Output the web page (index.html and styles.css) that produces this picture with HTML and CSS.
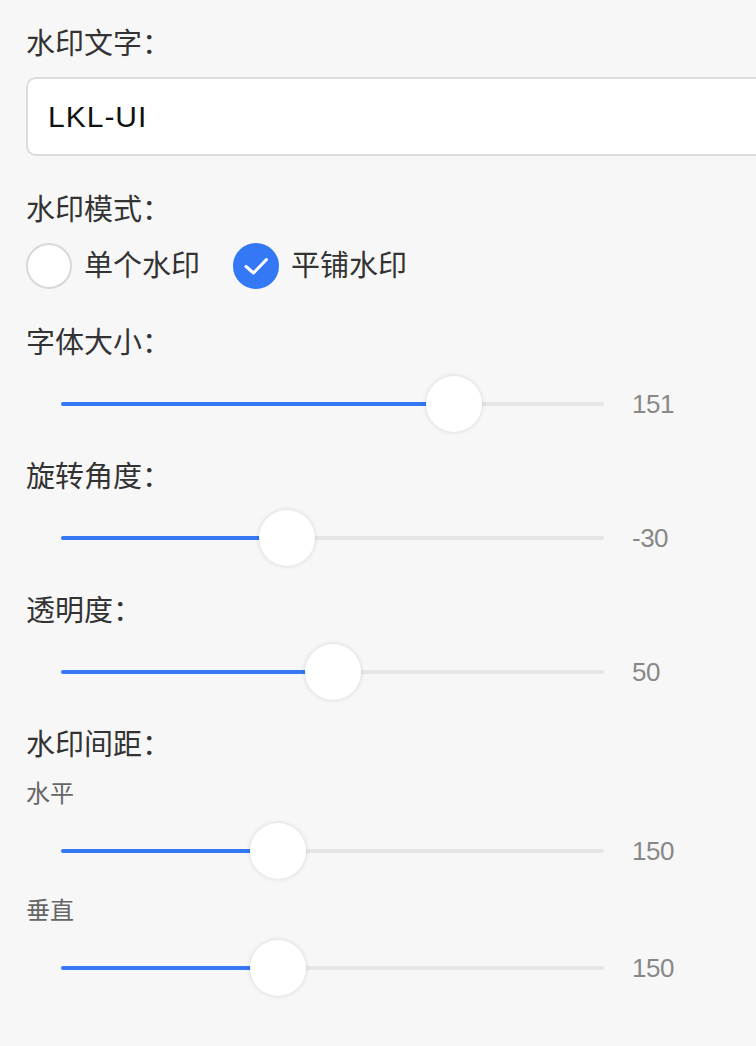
FILE: index.html
```html
<!DOCTYPE html>
<html lang="zh">
<head>
  <meta charset="UTF-8">
  <meta name="viewport" content="width=device-width, initial-scale=1.0">
  <title>水印设置</title>
  <link rel="stylesheet" href="styles.css">
</head>
<body>

<div class="panel">
  <div class="form-item spaced">
    <div class="label">水印文字：</div>
    <input class="text-input" type="text" value="LKL-UI">
  </div>

  <div class="form-item spaced">
    <div class="label">水印模式：</div>
    <div class="radio-group">
      <label class="radio">
        <span class="radio-dot"></span>
        <span>单个水印</span>
      </label>
      <label class="radio checked">
        <span class="radio-dot">
          <svg viewBox="0 0 46 46" width="46" height="46"><path d="M13 23.5l7.5 6.5 13-13.5" fill="none" stroke="#fff" stroke-width="3" stroke-linecap="round" stroke-linejoin="round"/></svg>
        </span>
        <span>平铺水印</span>
      </label>
    </div>
  </div>

  <div class="form-item">
    <div class="label">字体大小：</div>
    <div class="slider">
      <div class="track">
        <div class="fill" style="width: 72.4%"></div>
        <div class="thumb" style="left: 72.4%"></div>
      </div>
      <div class="value">151</div>
    </div>
  </div>

  <div class="form-item">
    <div class="label">旋转角度：</div>
    <div class="slider">
      <div class="track">
        <div class="fill" style="width: 41.7%"></div>
        <div class="thumb" style="left: 41.7%"></div>
      </div>
      <div class="value">-30</div>
    </div>
  </div>

  <div class="form-item">
    <div class="label">透明度：</div>
    <div class="slider">
      <div class="track">
        <div class="fill" style="width: 50%"></div>
        <div class="thumb" style="left: 50%"></div>
      </div>
      <div class="value">50</div>
    </div>
  </div>

  <div class="form-item">
    <div class="label">水印间距：</div>
    <div class="sub-label">水平</div>
    <div class="slider">
      <div class="track">
        <div class="fill" style="width: 40%"></div>
        <div class="thumb" style="left: 40%"></div>
      </div>
      <div class="value">150</div>
    </div>
    <div class="sub-label">垂直</div>
    <div class="slider">
      <div class="track">
        <div class="fill" style="width: 40%"></div>
        <div class="thumb" style="left: 40%"></div>
      </div>
      <div class="value">150</div>
    </div>
  </div>
</div>

</body>
</html>
```

FILE: styles.css
```css
html, body {
  overflow-x: hidden;
}
body {
  margin: 0;
  background-color: #f7f7f7;
  font-family: "Liberation Sans", "Noto Sans CJK SC", sans-serif;
  color: #333;
}
.panel {
  padding: 24px 26px 40px;
}
.form-item {
  margin-bottom: 25px;
}
.form-item.spaced {
  margin-bottom: 34px;
}
.label {
  font-size: 29px;
  line-height: 40px;
  height: 40px;
  margin-bottom: 13px;
}
.sub-label {
  font-size: 24px;
  line-height: 32px;
  color: #666;
  margin: 0 0 13px;
}
.slider + .sub-label {
  margin-top: 16px;
}
.label + .sub-label {
  margin-top: 0;
}
.text-input {
  display: block;
  box-sizing: border-box;
  width: 780px;
  height: 79px;
  padding: 0 20px;
  border: 2px solid #dcdcdc;
  border-radius: 10px;
  background: #fff;
  font-family: "Liberation Sans", sans-serif;
  font-size: 30px;
  letter-spacing: 1px;
  color: #111;
  outline: none;
}
.radio-group {
  display: flex;
  align-items: center;
  height: 46px;
}
.radio {
  display: flex;
  align-items: center;
  margin-right: 33px;
  font-size: 29px;
  line-height: 46px;
}
.radio-dot {
  box-sizing: border-box;
  width: 46px;
  height: 46px;
  margin-right: 12px;
  border: 2px solid #d8d8d8;
  border-radius: 50%;
  background: #fff;
}
.radio-dot svg {
  display: block;
  margin: -2px;
}
.radio.checked .radio-dot {
  border-color: #3478f6;
  background: #3478f6;
}
.slider {
  display: flex;
  align-items: center;
  height: 56px;
  padding-left: 35px;
}
.track {
  position: relative;
  flex: 1;
  height: 4px;
  border-radius: 2px;
  background: #e6e6e6;
}
.fill {
  height: 4px;
  border-radius: 2px;
  background: #3478f6;
}
.thumb {
  position: absolute;
  top: 50%;
  width: 56px;
  height: 56px;
  border-radius: 50%;
  background: #fff;
  box-shadow: 0 0 5px rgba(0, 0, 0, 0.14);
  transform: translate(-50%, -50%);
}
.value {
  width: 98px;
  margin-left: 28px;
  font-size: 26px;
  letter-spacing: -0.5px;
  color: #888;
}
```
